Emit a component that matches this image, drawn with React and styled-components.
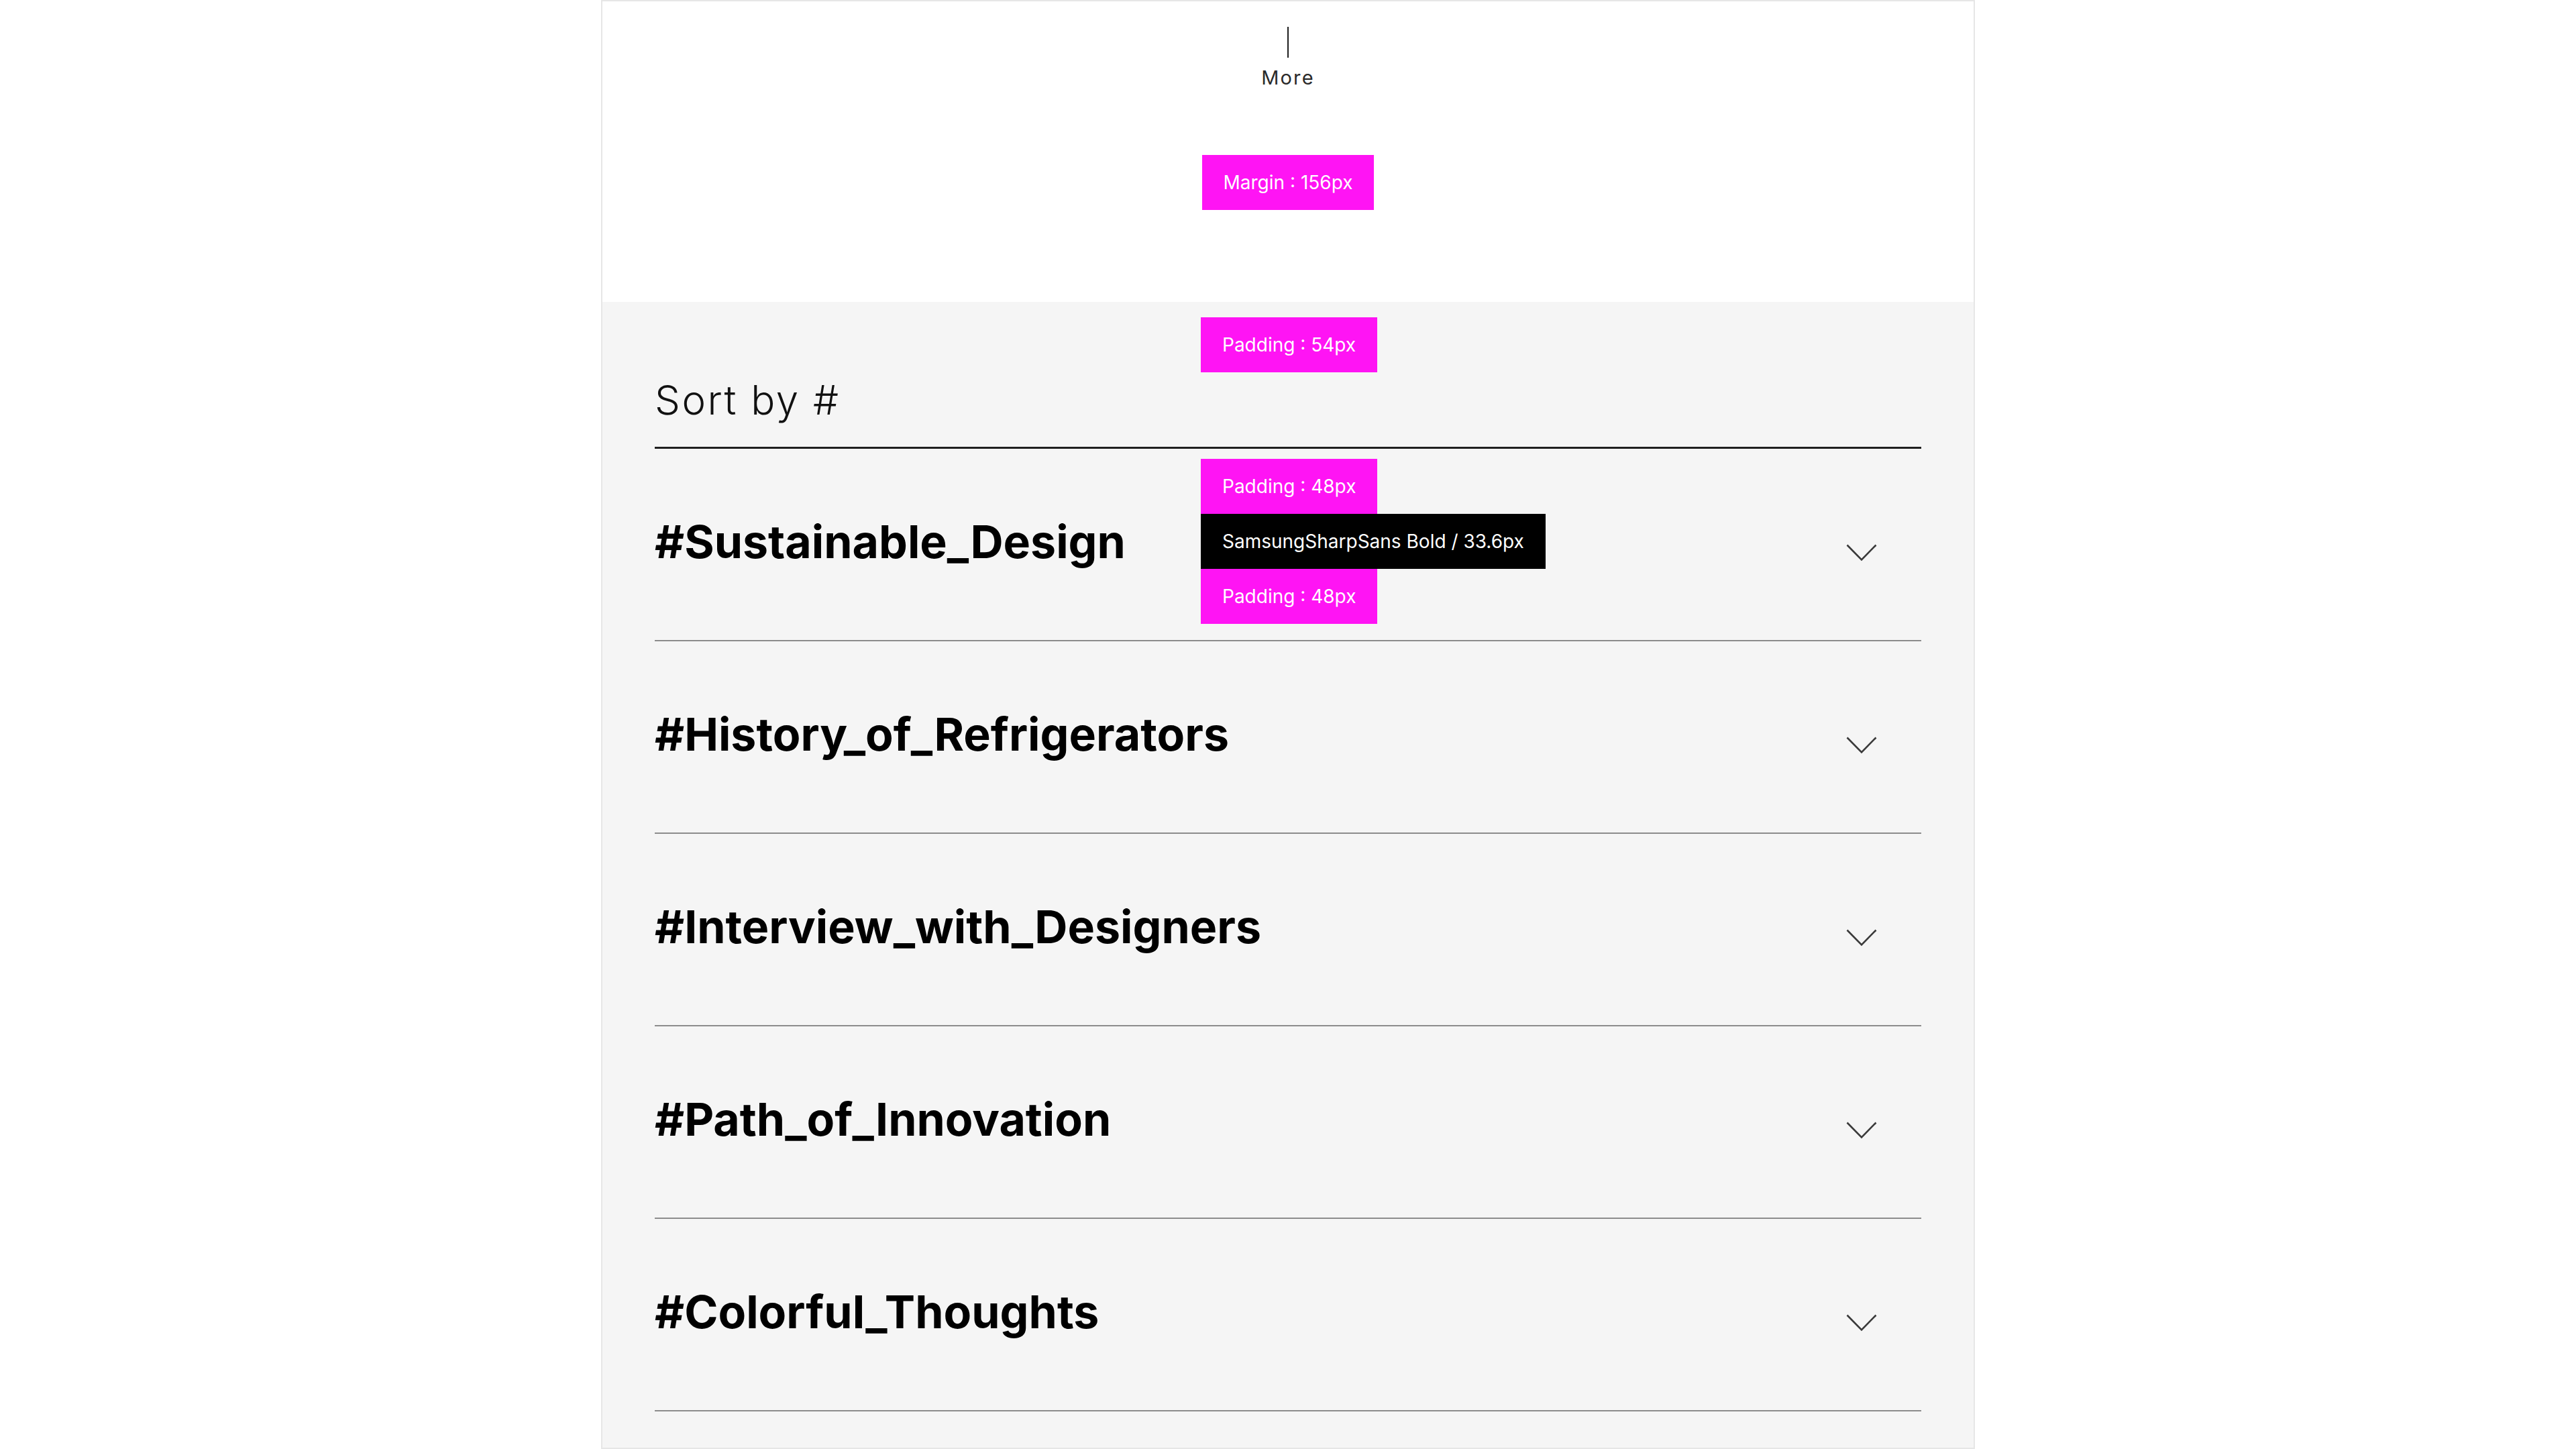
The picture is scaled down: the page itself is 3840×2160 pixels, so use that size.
import React from "react";
import styled, { createGlobalStyle } from "styled-components";

const Global = createGlobalStyle`
  html, body { margin: 0; padding: 0; background: #ffffff; }
  body { font-family: "Inter", "Roboto", sans-serif; }
  * { box-sizing: border-box; }
`;

const Panel = styled.div`
  width: 2048px;
  height: 2160px;
  margin: 0 auto;
  border: 2px solid #e6e6e6;
  background: #ffffff;
  overflow: hidden;
  display: flex;
  flex-direction: column;
`;

const TopSection = styled.section`
  height: 448px;
  display: flex;
  flex-direction: column;
  align-items: center;
  padding-top: 38px;
`;

const MoreButton = styled.button`
  display: flex;
  flex-direction: column;
  align-items: center;
  background: none;
  border: 0;
  padding: 0;
  cursor: pointer;
`;

const MoreLine = styled.span`
  display: block;
  width: 2px;
  height: 46px;
  background: #1e1e1e;
`;

const MoreText = styled.span`
  margin-top: 15px;
  font-family: "Inter", sans-serif;
  font-size: 29px;
  line-height: 1;
  letter-spacing: 2.2px;
  color: #2a2a2a;
`;

const Tag = styled.div`
  display: inline-flex;
  align-items: center;
  height: 82px;
  padding: 0 32px;
  background: ${(p) => (p.$dark ? "#000000" : "#ff14f4")};
  color: #ffffff;
  font-family: "Inter", sans-serif;
  font-size: 28px;
  letter-spacing: 0px;
  white-space: nowrap;
`;

const MarginTag = styled(Tag)`
  margin-top: 101px;
`;

const GreySection = styled.section`
  position: relative;
  flex: 1;
  background: #f5f5f5;
  padding: 0 78px;
`;

const Overlay = styled.div`
  position: absolute;
  top: ${(p) => p.$top}px;
  left: calc(50% - 130px);
  display: flex;
  flex-direction: column;
  align-items: flex-start;
  z-index: 2;
`;

const Header = styled.div`
  padding-top: 116px;
  padding-bottom: 40px;
  border-bottom: 3px solid #1f1f1f;
`;

const HeaderText = styled.h2`
  margin: 0;
  font-family: "Inter", sans-serif;
  font-weight: 300;
  font-size: 60px;
  line-height: 1;
  letter-spacing: 2.5px;
  color: #111111;
`;

const Row = styled.div`
  position: relative;
  height: 287px;
  display: flex;
  align-items: center;
  justify-content: space-between;
  border-bottom: 2px solid #8c8c8c;
`;

const RowTitle = styled.h3`
  margin: 0 0 10px 0;
  font-family: "Inter", sans-serif;
  font-weight: 700;
  font-size: 68px;
  line-height: 1;
  letter-spacing: 0px;
  color: #000000;
`;

const Chevron = styled.svg`
  width: 46px;
  height: 26px;
  margin-top: 24px;
  margin-right: 66px;
  flex-shrink: 0;
`;

const topics = [
  "#Sustainable_Design",
  "#History_of_Refrigerators",
  "#Interview_with_Designers",
  "#Path_of_Innovation",
  "#Colorful_Thoughts",
];

export default function App() {
  return (
    <>
      <Global />
      <Panel>
        <TopSection>
          <MoreButton>
            <MoreLine />
            <MoreText>More</MoreText>
          </MoreButton>
          <MarginTag>Margin : 156px</MarginTag>
        </TopSection>
        <GreySection>
          <Overlay $top={23}>
            <Tag>Padding : 54px</Tag>
          </Overlay>
          <Header>
            <HeaderText>Sort by #</HeaderText>
          </Header>
          {topics.map((t, i) => (
            <Row key={t}>
              <RowTitle>{t}</RowTitle>
              <Chevron viewBox="0 0 46 26" fill="none">
                <polyline
                  points="1.5,1.5 23,23.5 44.5,1.5"
                  stroke="#3a3a3a"
                  strokeWidth="2.6"
                />
              </Chevron>
              {i === 0 && (
                <Overlay $top={15}>
                  <Tag>Padding : 48px</Tag>
                  <Tag $dark>SamsungSharpSans Bold / 33.6px</Tag>
                  <Tag>Padding : 48px</Tag>
                </Overlay>
              )}
            </Row>
          ))}
        </GreySection>
      </Panel>
    </>
  );
}
